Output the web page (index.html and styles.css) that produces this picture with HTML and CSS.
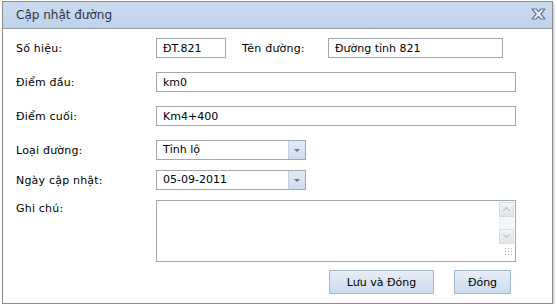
FILE: index.html
```html
<!DOCTYPE html>
<html lang="vi">
<head>
<meta charset="UTF-8">
<title>Cập nhật đường</title>
<link rel="stylesheet" href="styles.css">
</head>
<body>

<div class="window">
    <div class="titlebar">
        <span class="title">Cập nhật đường</span>
        <span class="close">
            <svg width="15" height="12" viewBox="0 0 15 12">
                <path d="M1 1 L5 1 L7.5 3.6 L10 1 L14 1 L9.8 6 L14 11 L10 11 L7.5 8.4 L5 11 L1 11 L5.2 6 Z" fill="#eef2f8" stroke="#6c7990" stroke-width="1.2" stroke-linejoin="round"/>
            </svg>
        </span>
    </div>

    <form class="form">
        <div class="row">
            <label>Số hiệu:</label>
            <input type="text" class="field short" value="ĐT.821">
            <label class="inline">Tên đường:</label>
            <input type="text" class="field medium" value="Đường tỉnh 821">
        </div>
        <div class="row">
            <label>Điểm đầu:</label>
            <input type="text" class="field long" value="km0">
        </div>
        <div class="row">
            <label>Điểm cuối:</label>
            <input type="text" class="field long" value="Km4+400">
        </div>
        <div class="row">
            <label>Loại đường:</label>
            <div class="combo">
                <span class="combo-text">Tỉnh lộ</span>
                <span class="combo-btn"></span>
            </div>
        </div>
        <div class="row tight">
            <label>Ngày cập nhật:</label>
            <div class="combo">
                <span class="combo-text">05-09-2011</span>
                <span class="combo-btn"></span>
            </div>
        </div>
        <div class="row tight top">
            <label>Ghi chú:</label>
            <div class="memo">
                <div class="memo-text"></div>
                <div class="scroll">
                    <span class="sbtn up"></span>
                    <span class="strack"></span>
                    <span class="sbtn down"></span>
                    <span class="grip"></span>
                </div>
            </div>
        </div>
        <div class="buttons">
            <button type="button" class="btn save">Lưu và Đóng</button>
            <button type="button" class="btn close-btn">Đóng</button>
        </div>
    </form>
</div>

</body>
</html>
```

FILE: styles.css
```css
body {
    margin: 0;
    padding: 1px 0 0 2px;
    background-color: #fff;
    font-family: "DejaVu Sans", Verdana, sans-serif;
    font-size: 11px;
    color: #000;
}
.window {
    width: 549px;
    height: 301px;
    border: 1px solid #8d8d8d;
    background-color: #fff;
    box-shadow: 1px 2px 2px rgba(0, 0, 0, 0.25);
}
.titlebar {
    height: 26px;
    background: linear-gradient(#cadbf0, #c0d3ec);
    border-bottom: 1px solid #8f9aab;
    display: flex;
    align-items: center;
    justify-content: space-between;
    padding: 0 6px 0 13px;
}
.title {
    font-size: 12px;
    color: #2a3344;
}
.close {
    display: flex;
    margin-top: -2px;
}
.form {
    padding: 9px 0 0 13px;
}
.row {
    display: flex;
    align-items: center;
    height: 20px;
    margin-bottom: 14px;
}
.row.tight {
    margin-top: -4px;
}
.row.top {
    align-items: flex-start;
    height: 62px;
    margin-bottom: 8px;
}
.row.top label {
    margin-top: 2px;
}
label {
    width: 140px;
    flex: none;
    letter-spacing: 0.2px;
}
label.inline {
    width: 86px;
    margin-left: 16px;
}
.field {
    box-sizing: border-box;
    height: 20px;
    border: 1px solid #a1a8b1;
    padding: 0 6px;
    font-family: inherit;
    font-size: 11px;
    color: #000;
    background-color: #fff;
}
.short {
    width: 70px;
}
.medium {
    width: 175px;
}
.long {
    width: 360px;
}
.combo {
    box-sizing: border-box;
    width: 150px;
    height: 20px;
    border: 1px solid #a1a8b1;
    display: flex;
}
.combo-text {
    flex: 1;
    padding-left: 6px;
    line-height: 18px;
}
.combo-btn {
    width: 16px;
    background: linear-gradient(#e2eaf5, #cfdcee);
    border-left: 1px solid #c3cfdf;
    position: relative;
}
.combo-btn::after {
    content: "";
    position: absolute;
    left: 5px;
    top: 8px;
    border-left: 3px solid transparent;
    border-right: 3px solid transparent;
    border-top: 3px solid #6b7786;
}
.memo {
    box-sizing: border-box;
    width: 360px;
    height: 62px;
    border: 1px solid #a1a8b1;
    display: flex;
}
.memo-text {
    flex: 1;
}
.scroll {
    width: 17px;
    display: flex;
    flex-direction: column;
    align-items: center;
    padding-top: 1px;
}
.sbtn {
    box-sizing: border-box;
    width: 15px;
    height: 15px;
    border: 1px solid #d6dbe2;
    background: linear-gradient(#f2f4f7, #e1e5eb);
    position: relative;
}
.sbtn::after {
    content: "";
    position: absolute;
    left: 4px;
    width: 4px;
    height: 4px;
    border-left: 1px solid #b7bfca;
    border-top: 1px solid #b7bfca;
}
.sbtn.up::after {
    top: 5px;
    transform: rotate(45deg);
}
.sbtn.down::after {
    top: 2px;
    transform: rotate(225deg);
}
.strack {
    width: 15px;
    height: 12px;
    background-color: #f4f5f7;
}
.grip {
    width: 10px;
    height: 10px;
    margin-top: 3px;
    margin-left: 4px;
    background-image: radial-gradient(#a7b0bc 0.8px, transparent 1px);
    background-size: 3px 3px;
}
.buttons {
    display: flex;
    gap: 20px;
    padding-left: 313px;
}
.btn {
    box-sizing: border-box;
    height: 24px;
    border: 1px solid #a4b7d1;
    background: linear-gradient(#e7eef8, #ccdbee);
    font-family: inherit;
    font-size: 11px;
    color: #000;
    padding: 0;
}
.save {
    width: 105px;
}
.close-btn {
    width: 57px;
}
```
